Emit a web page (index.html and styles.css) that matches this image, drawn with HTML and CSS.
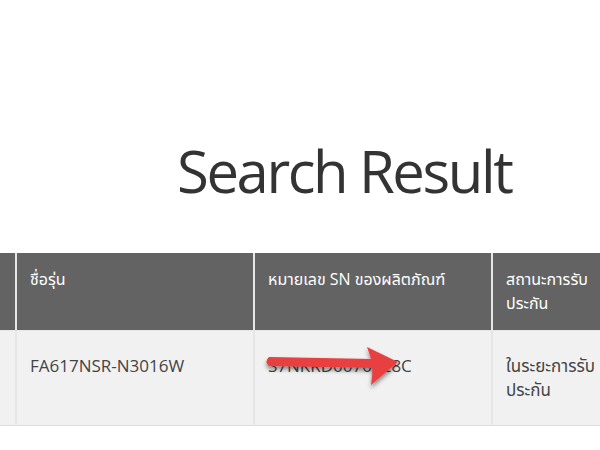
FILE: index.html
```html
<!DOCTYPE html>
<html lang="th">
<head>
<meta charset="utf-8">
<title>Search Result</title>
<link rel="stylesheet" href="styles.css">
</head>
<body>
<main class="page">
  <h1 class="title">Search Result</h1>
  <table class="result">
    <thead>
      <tr>
        <th class="col-no"></th>
        <th class="col-model">ชื่อรุ่น</th>
        <th class="col-sn">หมายเลข SN ของผลิตภัณฑ์</th>
        <th class="col-status">สถานะการรับ<wbr>ประกัน</th>
      </tr>
    </thead>
    <tbody>
      <tr>
        <td class="col-no"></td>
        <td class="col-model">FA617NSR-N3016W</td>
        <td class="col-sn">
          <div class="sn-wrap">
            <span class="sn">S7NKRD0070128C</span>
            <svg class="arrow" width="150" height="52" viewBox="0 0 150 52" aria-hidden="true">
              <defs>
                <filter id="sh" x="-10%" y="-30%" width="130%" height="180%">
                  <feDropShadow dx="0" dy="3" stdDeviation="2" flood-color="#000" flood-opacity="0.45"/>
                </filter>
              </defs>
              <g filter="url(#sh)" fill="#e8403f">
                <path d="M8 16 L112 18 L112 27 L8 25 Q3 20.5 8 16 Z"/>
                <path d="M106 6 L137 21 L110 44 Q114 24 106 6 Z"/>
              </g>
            </svg>
          </div>
        </td>
        <td class="col-status">ในระยะการรับ<wbr>ประกัน</td>
      </tr>
    </tbody>
  </table>
</main>
</body>
</html>
```
FILE: styles.css
```css
html, body {
  margin: 0;
  padding: 0;
  background: #ffffff;
  overflow: hidden;
}
body {
  font-family: "Open Sans", "Noto Sans", "Noto Sans Thai", Tahoma, sans-serif;
  color: #333333;
}
.page {
  width: 600px;
  height: 450px;
  overflow: hidden;
}
.title {
  margin: 0 0 43px 0;
  padding: 131px 0 0 177px;
  font-size: 58px;
  font-weight: 400;
  line-height: 79px;
  letter-spacing: -2.4px;
  color: #333333;
  white-space: nowrap;
}
.result {
  border-collapse: collapse;
  table-layout: fixed;
  width: 619px;
}
.result th,
.result td {
  text-align: left;
  vertical-align: top;
  line-height: 24px;
  border-left: 2px solid #e6e6e6;
}
.result th {
  background: #636363;
  color: #ffffff;
  font-weight: 400;
  font-size: 16px;
  padding: 14px 13px 15px 13px;
  height: 48px;
  border-bottom: 1px solid #e6e6e6;
}
.result td {
  background: #f1f1f1;
  color: #444444;
  font-size: 17px;
  padding: 23px 13px 23px 13px;
  height: 48px;
  border-bottom: 1px solid #dddddd;
}
.result .col-no {
  width: 15px;
  padding: 0;
  border-left: none;
}
.result .col-model { width: 210px; }
.result .col-sn { width: 210px; }
.result .col-status { width: 100px; }
.sn-wrap {
  position: relative;
}
.sn {
  color: #444444;
}
.arrow {
  position: absolute;
  left: -7px;
  top: -13px;
}
```
